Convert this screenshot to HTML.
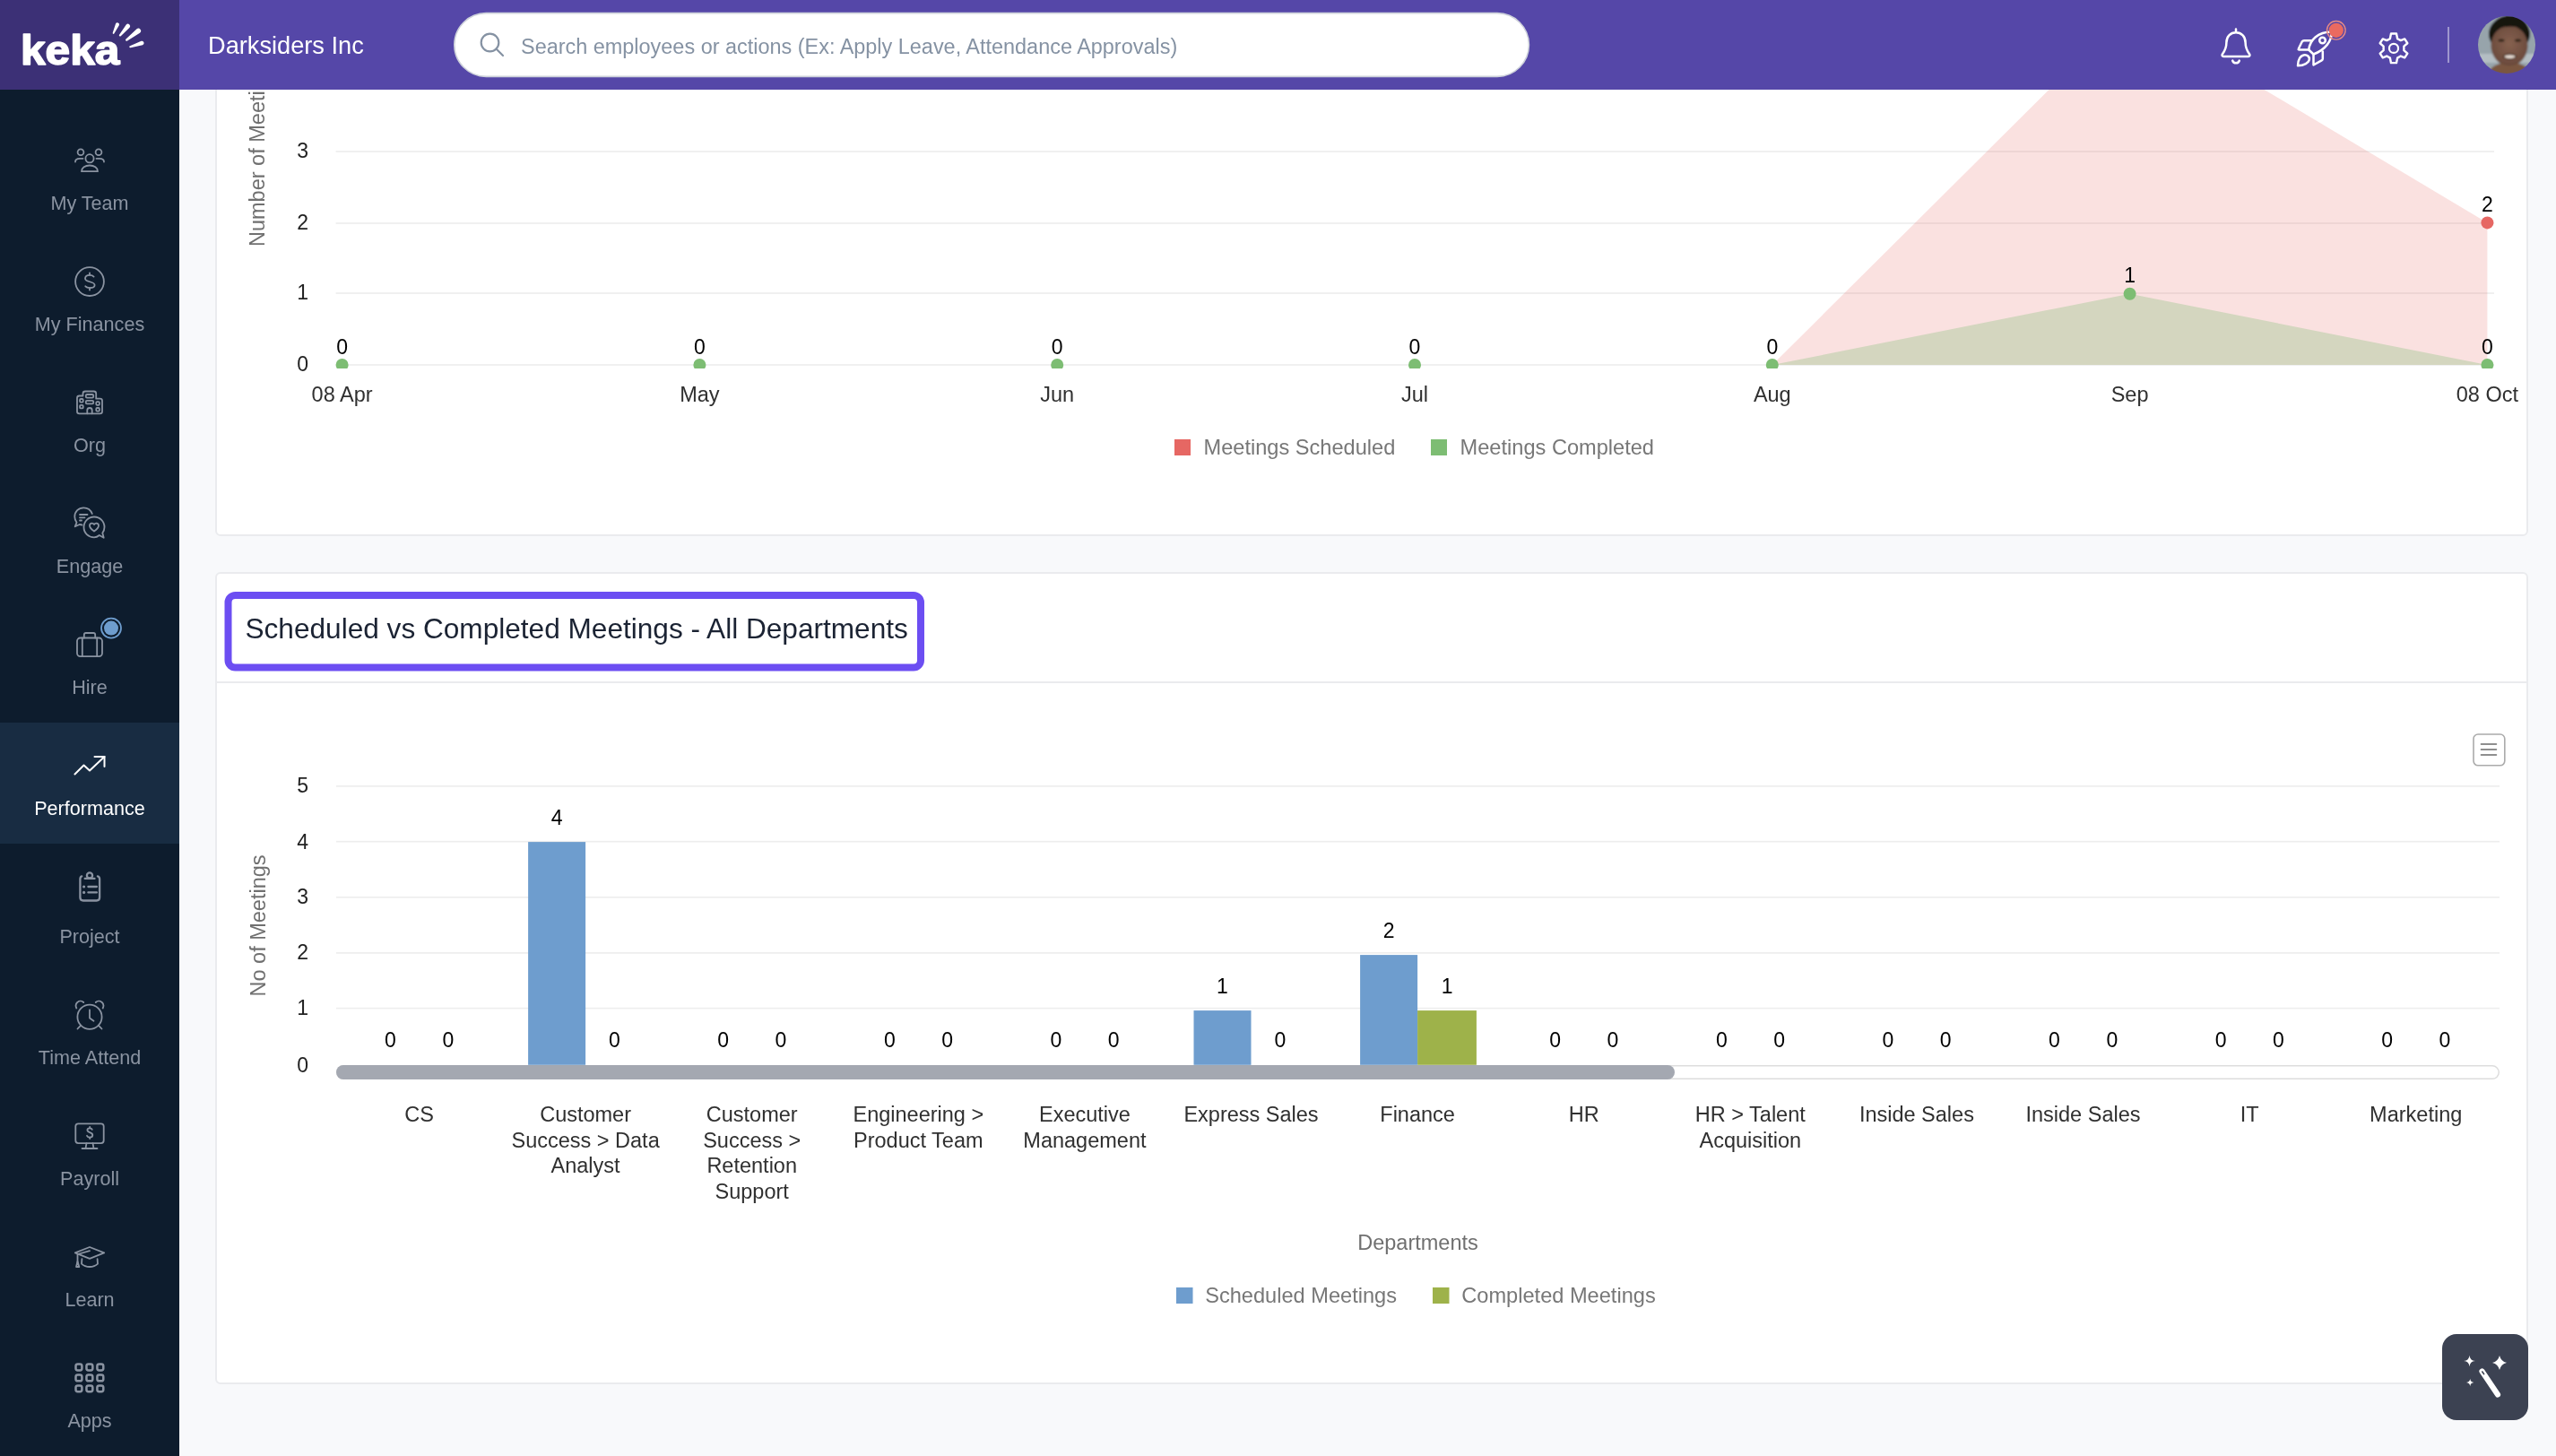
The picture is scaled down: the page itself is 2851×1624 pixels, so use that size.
<!DOCTYPE html><html><head><meta charset="utf-8"><style>*{margin:0;padding:0;box-sizing:border-box}html,body{width:2851px;height:1624px;overflow:hidden;background:#F8F9FB}svg{position:absolute;left:0;top:0;font-family:"Liberation Sans", sans-serif;will-change:transform}</style></head><body>
<svg width="2851" height="1624" viewBox="0 0 2851 1624">
<rect x="241" y="40" width="2578" height="557" rx="5" fill="#fff" stroke="#EAEBEE" stroke-width="2"/>
<rect x="241" y="639" width="2578" height="904" rx="5" fill="#fff" stroke="#EAEBEE" stroke-width="2"/>
<rect x="242" y="760" width="2576" height="2" fill="#EAEBEE"/>
<rect x="374.6" y="406.2" width="2407.4" height="1.6" fill="#EDEDED"/>
<rect x="374.6" y="326.2" width="2407.4" height="1.6" fill="#EDEDED"/>
<rect x="374.6" y="248.2" width="2407.4" height="1.6" fill="#EDEDED"/>
<rect x="374.6" y="168.2" width="2407.4" height="1.6" fill="#EDEDED"/>
<rect x="374.6" y="88.7" width="2407.4" height="1.6" fill="#EDEDED"/>
<polygon points="381.6,407.0 381.6,407.0 780.4,407.0 1179.2,407.0 1578.0,407.0 1976.8,407.0 2375.6,10.5 2774.4,248.4 2774.4,407.0" fill="#E66763" fill-opacity="0.2"/>
<polygon points="381.6,407.0 381.6,407.0 780.4,407.0 1179.2,407.0 1578.0,407.0 1976.8,407.0 2375.6,327.7 2774.4,407.0 2774.4,407.0" fill="#D4D6BF"/>
<clipPath id="cp1"><rect x="300" y="0" width="2550" height="411"/></clipPath>
<g clip-path="url(#cp1)">
<circle cx="2375.6" cy="10.5" r="7" fill="#E66763"/>
<circle cx="2774.4" cy="248.4" r="7" fill="#E66763"/>
<circle cx="381.6" cy="407.0" r="7" fill="#7DBD73"/>
<circle cx="780.4" cy="407.0" r="7" fill="#7DBD73"/>
<circle cx="1179.2" cy="407.0" r="7" fill="#7DBD73"/>
<circle cx="1578.0" cy="407.0" r="7" fill="#7DBD73"/>
<circle cx="1976.8" cy="407.0" r="7" fill="#7DBD73"/>
<circle cx="2375.6" cy="327.7" r="7" fill="#7DBD73"/>
<circle cx="2774.4" cy="407.0" r="7" fill="#7DBD73"/>
</g>
<text x="344.0" y="414.3" font-size="23" fill="#222222" text-anchor="end" >0</text>
<text x="344.0" y="334.3" font-size="23" fill="#222222" text-anchor="end" >1</text>
<text x="344.0" y="256.3" font-size="23" fill="#222222" text-anchor="end" >2</text>
<text x="344.0" y="176.3" font-size="23" fill="#222222" text-anchor="end" >3</text>
<text x="381.6" y="394.5" font-size="23" fill="#000" text-anchor="middle" >0</text>
<text x="780.4" y="394.5" font-size="23" fill="#000" text-anchor="middle" >0</text>
<text x="1179.2" y="394.5" font-size="23" fill="#000" text-anchor="middle" >0</text>
<text x="1578.0" y="394.5" font-size="23" fill="#000" text-anchor="middle" >0</text>
<text x="1976.8" y="394.5" font-size="23" fill="#000" text-anchor="middle" >0</text>
<text x="2375.6" y="315.2" font-size="23" fill="#000" text-anchor="middle" >1</text>
<text x="2774.4" y="394.5" font-size="23" fill="#000" text-anchor="middle" >0</text>
<text x="2774.4" y="235.9" font-size="23" fill="#000" text-anchor="middle" >2</text>
<text x="381.6" y="448.3" font-size="23.5" fill="#303030" text-anchor="middle" >08 Apr</text>
<text x="780.4" y="448.3" font-size="23.5" fill="#303030" text-anchor="middle" >May</text>
<text x="1179.2" y="448.3" font-size="23.5" fill="#303030" text-anchor="middle" >Jun</text>
<text x="1578.0" y="448.3" font-size="23.5" fill="#303030" text-anchor="middle" >Jul</text>
<text x="1976.8" y="448.3" font-size="23.5" fill="#303030" text-anchor="middle" >Aug</text>
<text x="2375.6" y="448.3" font-size="23.5" fill="#303030" text-anchor="middle" >Sep</text>
<text x="2774.4" y="448.3" font-size="23.5" fill="#303030" text-anchor="middle" >08 Oct</text>
<text transform="translate(294.5,275) rotate(-90)" font-size="23.5" fill="#707070">Number of Meetings</text>
<rect x="1310" y="490" width="18" height="18" fill="#E66763"/>
<text x="1342.5" y="506.5" font-size="23.6" fill="#777777" text-anchor="start" >Meetings Scheduled</text>
<rect x="1596" y="490" width="18" height="18" fill="#7DBD73"/>
<text x="1628.6" y="506.5" font-size="23.6" fill="#777777" text-anchor="start" >Meetings Completed</text>
<rect x="254.5" y="664" width="772.5" height="80.5" rx="8" fill="none" stroke="#6C4EF2" stroke-width="8"/>
<text x="273.5" y="712.2" font-size="31.6" fill="#1B2333" text-anchor="start" >Scheduled vs Completed Meetings - All Departments</text>
<rect x="2759" y="819" width="34.8" height="34.8" rx="5" fill="#fff" stroke="#ABABAB" stroke-width="1.6"/>
<rect x="2766.7" y="829.0" width="18.5" height="2" rx="0.8" fill="#8E8E8E"/>
<rect x="2766.7" y="835.0" width="18.5" height="2" rx="0.8" fill="#8E8E8E"/>
<rect x="2766.7" y="841.0" width="18.5" height="2" rx="0.8" fill="#8E8E8E"/>
<rect x="375" y="1123.8" width="2413" height="1.6" fill="#EDEDED"/>
<rect x="375" y="1062.1" width="2413" height="1.6" fill="#EDEDED"/>
<rect x="375" y="1000.0" width="2413" height="1.6" fill="#EDEDED"/>
<rect x="375" y="937.9" width="2413" height="1.6" fill="#EDEDED"/>
<rect x="375" y="876.1" width="2413" height="1.6" fill="#EDEDED"/>
<text x="344.0" y="1196.0" font-size="23" fill="#222222" text-anchor="end" >0</text>
<text x="344.0" y="1132.0" font-size="23" fill="#222222" text-anchor="end" >1</text>
<text x="344.0" y="1070.2" font-size="23" fill="#222222" text-anchor="end" >2</text>
<text x="344.0" y="1008.2" font-size="23" fill="#222222" text-anchor="end" >3</text>
<text x="344.0" y="946.5" font-size="23" fill="#222222" text-anchor="end" >4</text>
<text x="344.0" y="884.0" font-size="23" fill="#222222" text-anchor="end" >5</text>
<text transform="translate(296,1111.5) rotate(-90)" font-size="23.5" fill="#707070">No of Meetings</text>
<text x="435.5" y="1168.4" font-size="23" fill="#000" text-anchor="middle" >0</text>
<text x="499.8" y="1168.4" font-size="23" fill="#000" text-anchor="middle" >0</text>
<text x="467.5" y="1251.2" font-size="23.5" fill="#303030" text-anchor="middle" >CS</text>
<rect x="589.1" y="939.1" width="64" height="248.7" fill="#6E9DCE"/>
<text x="621.1" y="919.7" font-size="23" fill="#000" text-anchor="middle" >4</text>
<text x="685.4" y="1168.4" font-size="23" fill="#000" text-anchor="middle" >0</text>
<text x="653.1" y="1251.2" font-size="23.5" fill="#303030" text-anchor="middle" >Customer</text>
<text x="653.1" y="1279.8" font-size="23.5" fill="#303030" text-anchor="middle" >Success &gt; Data</text>
<text x="653.1" y="1308.4" font-size="23.5" fill="#303030" text-anchor="middle" >Analyst</text>
<text x="806.7" y="1168.4" font-size="23" fill="#000" text-anchor="middle" >0</text>
<text x="871.0" y="1168.4" font-size="23" fill="#000" text-anchor="middle" >0</text>
<text x="838.7" y="1251.2" font-size="23.5" fill="#303030" text-anchor="middle" >Customer</text>
<text x="838.7" y="1279.8" font-size="23.5" fill="#303030" text-anchor="middle" >Success &gt;</text>
<text x="838.7" y="1308.4" font-size="23.5" fill="#303030" text-anchor="middle" >Retention</text>
<text x="838.7" y="1337.0" font-size="23.5" fill="#303030" text-anchor="middle" >Support</text>
<text x="992.3" y="1168.4" font-size="23" fill="#000" text-anchor="middle" >0</text>
<text x="1056.6" y="1168.4" font-size="23" fill="#000" text-anchor="middle" >0</text>
<text x="1024.3" y="1251.2" font-size="23.5" fill="#303030" text-anchor="middle" >Engineering &gt;</text>
<text x="1024.3" y="1279.8" font-size="23.5" fill="#303030" text-anchor="middle" >Product Team</text>
<text x="1177.9" y="1168.4" font-size="23" fill="#000" text-anchor="middle" >0</text>
<text x="1242.2" y="1168.4" font-size="23" fill="#000" text-anchor="middle" >0</text>
<text x="1209.9" y="1251.2" font-size="23.5" fill="#303030" text-anchor="middle" >Executive</text>
<text x="1209.9" y="1279.8" font-size="23.5" fill="#303030" text-anchor="middle" >Management</text>
<rect x="1331.5" y="1127.1" width="64" height="60.7" fill="#6E9DCE"/>
<text x="1363.5" y="1107.7" font-size="23" fill="#000" text-anchor="middle" >1</text>
<text x="1427.8" y="1168.4" font-size="23" fill="#000" text-anchor="middle" >0</text>
<text x="1395.5" y="1251.2" font-size="23.5" fill="#303030" text-anchor="middle" >Express Sales</text>
<rect x="1517.1" y="1065.1" width="64" height="122.7" fill="#6E9DCE"/>
<rect x="1581.1" y="1127.1" width="65.8" height="60.7" fill="#9EB24A"/>
<text x="1549.1" y="1045.7" font-size="23" fill="#000" text-anchor="middle" >2</text>
<text x="1614.1" y="1107.7" font-size="23" fill="#000" text-anchor="middle" >1</text>
<text x="1581.1" y="1251.2" font-size="23.5" fill="#303030" text-anchor="middle" >Finance</text>
<text x="1734.7" y="1168.4" font-size="23" fill="#000" text-anchor="middle" >0</text>
<text x="1799.0" y="1168.4" font-size="23" fill="#000" text-anchor="middle" >0</text>
<text x="1766.7" y="1251.2" font-size="23.5" fill="#303030" text-anchor="middle" >HR</text>
<text x="1920.3" y="1168.4" font-size="23" fill="#000" text-anchor="middle" >0</text>
<text x="1984.6" y="1168.4" font-size="23" fill="#000" text-anchor="middle" >0</text>
<text x="1952.3" y="1251.2" font-size="23.5" fill="#303030" text-anchor="middle" >HR &gt; Talent</text>
<text x="1952.3" y="1279.8" font-size="23.5" fill="#303030" text-anchor="middle" >Acquisition</text>
<text x="2105.9" y="1168.4" font-size="23" fill="#000" text-anchor="middle" >0</text>
<text x="2170.2" y="1168.4" font-size="23" fill="#000" text-anchor="middle" >0</text>
<text x="2137.9" y="1251.2" font-size="23.5" fill="#303030" text-anchor="middle" >Inside Sales</text>
<text x="2291.5" y="1168.4" font-size="23" fill="#000" text-anchor="middle" >0</text>
<text x="2355.8" y="1168.4" font-size="23" fill="#000" text-anchor="middle" >0</text>
<text x="2323.5" y="1251.2" font-size="23.5" fill="#303030" text-anchor="middle" >Inside Sales</text>
<text x="2477.1" y="1168.4" font-size="23" fill="#000" text-anchor="middle" >0</text>
<text x="2541.4" y="1168.4" font-size="23" fill="#000" text-anchor="middle" >0</text>
<text x="2509.1" y="1251.2" font-size="23.5" fill="#303030" text-anchor="middle" >IT</text>
<text x="2662.7" y="1168.4" font-size="23" fill="#000" text-anchor="middle" >0</text>
<text x="2727.0" y="1168.4" font-size="23" fill="#000" text-anchor="middle" >0</text>
<text x="2694.7" y="1251.2" font-size="23.5" fill="#303030" text-anchor="middle" >Marketing</text>
<rect x="375.75" y="1188.85" width="2411.5" height="14.5" rx="7.25" fill="#fff" stroke="#DDDDDD" stroke-width="1.5"/>
<rect x="375" y="1188" width="1493" height="16" rx="8" fill="#A4A8B1"/>
<text x="1581.5" y="1394.2" font-size="23.5" fill="#707070" text-anchor="middle" >Departments</text>
<rect x="1312" y="1436" width="18.5" height="18" fill="#6E9DCE"/>
<text x="1344.2" y="1452.7" font-size="23.6" fill="#777777" text-anchor="start" >Scheduled Meetings</text>
<rect x="1598" y="1436" width="18.5" height="18" fill="#9EB24A"/>
<text x="1630.3" y="1452.7" font-size="23.6" fill="#777777" text-anchor="start" >Completed Meetings</text>
<rect x="0" y="0" width="2851" height="100" fill="#5547A8"/>
<rect x="0" y="0" width="200" height="100" fill="#3C3076"/>
<text x="23" y="71.8" font-size="47" font-weight="bold" fill="#fff" stroke="#fff" stroke-width="1.6" stroke-linejoin="round" textLength="110.5" lengthAdjust="spacingAndGlyphs">keka</text>
<g fill="#fff"><path d="M127.42,37.34 L132.84,28.28 A2.10,2.10 0 0 0 129.02,26.54 L125.74,36.58 A0.92,0.92 0 0 0 127.42,37.34 Z"/><path d="M134.75,40.17 L144.59,30.72 A2.50,2.50 0 0 0 140.78,27.49 L133.07,38.75 A1.10,1.10 0 0 0 134.75,40.17 Z"/><path d="M142.03,45.52 L155.99,36.73 A2.80,2.80 0 0 0 152.57,32.29 L140.52,43.57 A1.23,1.23 0 0 0 142.03,45.52 Z"/><path d="M145.58,53.25 L159.03,50.20 A2.30,2.30 0 0 0 157.60,45.83 L144.95,51.32 A1.01,1.01 0 0 0 145.58,53.25 Z"/></g>
<text x="232.0" y="60.0" font-size="27.2" fill="#fff" text-anchor="start" >Darksiders Inc</text>
<rect x="506.8" y="14.6" width="1198.6" height="70.8" rx="35.4" fill="#fff" stroke="#CDD1DA" stroke-width="1.6"/>
<g fill="none" stroke="#8592A3" stroke-width="2.2" stroke-linecap="round"><circle cx="546.5" cy="47.5" r="9.8"/><line x1="553.5" y1="54.5" x2="561" y2="62"/></g>
<text x="581.0" y="59.6" font-size="23.45" fill="#8592A3" text-anchor="start" >Search employees or actions (Ex: Apply Leave, Attendance Approvals)</text>
<g fill="none" stroke="#fff" stroke-width="2.5" stroke-linejoin="round" stroke-linecap="round"><path d="M2494,32.6 L2494,36 M2480.2,63 L2507.8,63 C2509.4,63 2510,61.6 2509,60.2 C2506.2,56.4 2504.6,52 2504.6,47.5 C2504.6,40.8 2500.2,36.3 2494,36.3 C2487.8,36.3 2483.4,40.8 2483.4,47.5 C2483.4,52 2481.8,56.4 2479,60.2 C2478,61.6 2478.6,63 2480.2,63 Z"/><path d="M2490.2,67.6 C2491.2,71.2 2496.8,71.2 2497.8,67.6"/></g>
<g fill="none" stroke="#fff" stroke-width="2.5" stroke-linejoin="round" stroke-linecap="round"><path d="M2575.2,55.5 C2576.5,45 2585,35.5 2600.8,35.5 C2601,45.5 2594,55.5 2580.5,60.5 Z"/><circle cx="2590.5" cy="45" r="3.3"/><path d="M2577.5,45.2 L2570,45.2 C2569,45.2 2568.2,45.7 2567.7,46.5 L2563.8,54.5 C2563.4,55.2 2563.8,55.6 2564.6,55.6 L2575.2,55.6"/><path d="M2590.8,57.5 L2590.8,65.5 C2590.8,66.3 2590.3,67 2589.6,67.4 L2580.5,72.5 L2580.5,60.5"/><path d="M2563,73.3 C2563,66.5 2566,61.7 2570.5,61.2 C2573.6,61 2576,63.2 2575.9,66 C2575.5,70.2 2570,73 2563,73.3 Z"/></g>
<circle cx="2605.8" cy="33.8" r="10.3" fill="none" stroke="#E58A86" stroke-width="1.4"/>
<circle cx="2605.8" cy="33.8" r="8.1" fill="#EA6A60"/>
<path transform="translate(2670,53.85) scale(0.94) translate(-2670,-53.85)" d="M2666.8,36.5 L2673.2,36.5 L2674.4,42.5 L2678.3,44.6 L2683,42.8 L2686.3,47.9 L2682.1,51.5 L2682.1,56.3 L2686.3,59.9 L2683,65 L2678.3,63.1 L2674.4,65.3 L2673.2,71.2 L2666.8,71.2 L2665.6,65.3 L2661.7,63.1 L2657,65 L2653.7,59.9 L2657.9,56.3 L2657.9,51.5 L2653.7,47.9 L2657,42.8 L2661.7,44.6 L2665.6,42.5 Z" fill="none" stroke="#fff" stroke-width="2.55" stroke-linejoin="round"/>
<circle cx="2670" cy="53.9" r="5.05" fill="none" stroke="#fff" stroke-width="2.2"/>
<rect x="2730.2" y="30" width="1.6" height="40" fill="#fff" opacity="0.55"/>
<defs><clipPath id="avc"><circle cx="2796" cy="50" r="32"/></clipPath><filter id="blr" x="-10%" y="-10%" width="120%" height="120%"><feGaussianBlur stdDeviation="0.9"/></filter><radialGradient id="face" cx="0.5" cy="0.45" r="0.55"><stop offset="0" stop-color="#86614F"/><stop offset="1" stop-color="#6A4A3C"/></radialGradient></defs>
<g clip-path="url(#avc)"><g filter="url(#blr)"><rect x="2760" y="14" width="72" height="72" fill="#97A4AB"/><rect x="2760" y="60" width="72" height="10" fill="#B4BEC3"/><path d="M2774,86 C2776,74 2786,70 2799,70 C2812,70 2822,74 2824,86 Z" fill="#7A563F"/><ellipse cx="2799" cy="38" rx="23" ry="20" fill="#151311"/><ellipse cx="2799" cy="51" rx="20.5" ry="22.5" fill="url(#face)"/><path d="M2778,40 C2778,24 2788,17 2800,17 C2812,17 2821,24 2821,40 C2817,33 2812,30 2800,29.5 C2788,30 2782,33 2778,40 Z" fill="#151311"/><ellipse cx="2790" cy="45" rx="3.5" ry="1.6" fill="#2E2018"/><ellipse cx="2808.5" cy="45" rx="3.5" ry="1.6" fill="#2E2018"/><ellipse cx="2799.5" cy="63" rx="7.5" ry="3.2" fill="#4A3026"/><ellipse cx="2799.5" cy="63.2" rx="5.8" ry="1.9" fill="#E6DBD2"/></g></g>
<rect x="0" y="100" width="200" height="1524" fill="#0D1C2D"/>
<rect x="0" y="806" width="200" height="135" fill="#182C42"/>
<text x="100.0" y="233.9" font-size="21.6" fill="#8A93A1" text-anchor="middle" >My Team</text>
<text x="100.0" y="368.9" font-size="21.6" fill="#8A93A1" text-anchor="middle" >My Finances</text>
<text x="100.0" y="504.0" font-size="21.6" fill="#8A93A1" text-anchor="middle" >Org</text>
<text x="100.0" y="638.7" font-size="21.6" fill="#8A93A1" text-anchor="middle" >Engage</text>
<text x="100.0" y="773.9" font-size="21.6" fill="#8A93A1" text-anchor="middle" >Hire</text>
<text x="100.0" y="908.8" font-size="21.6" fill="#FFFFFF" text-anchor="middle" >Performance</text>
<text x="100.0" y="1051.8" font-size="21.6" fill="#8A93A1" text-anchor="middle" >Project</text>
<text x="100.0" y="1186.8" font-size="21.6" fill="#8A93A1" text-anchor="middle" >Time Attend</text>
<text x="100.0" y="1321.8" font-size="21.6" fill="#8A93A1" text-anchor="middle" >Payroll</text>
<text x="100.0" y="1456.8" font-size="21.6" fill="#8A93A1" text-anchor="middle" >Learn</text>
<text x="100.0" y="1591.8" font-size="21.6" fill="#8A93A1" text-anchor="middle" >Apps</text>
<g fill="none" stroke="#8A93A1" stroke-width="1.8" stroke-linecap="round" stroke-linejoin="round"><circle cx="90" cy="169.8" r="3.4"/><circle cx="110" cy="169.8" r="3.4"/><circle cx="100" cy="176.8" r="4.6"/><path d="M91,191.2 C91,187 95,184.5 100,184.5 C105,184.5 109,187 109,191.2 Z"/><path d="M84,180.5 C84,178 86,176.8 89,176.8 L92.5,176.8"/><path d="M116,180.5 C116,178 114,176.8 111,176.8 L107.5,176.8"/></g>
<g fill="none" stroke="#8A93A1" stroke-width="1.8" stroke-linecap="round" stroke-linejoin="round"><circle cx="100" cy="314.1" r="15.9"/><path d="M104.6,308.6 C103.6,307.5 102,306.9 100,306.9 C97,306.9 95,308.5 95,310.7 C95,315 105.6,313.5 105.6,318 C105.6,320 103.4,321.1 100.2,321.1 C98,321.1 96.3,320.5 95.3,319.3"/><line x1="100" y1="304.4" x2="100" y2="306.9"/><line x1="100" y1="321.1" x2="100" y2="323.6"/></g>
<g fill="none" stroke="#8A93A1" stroke-width="1.8" stroke-linecap="round" stroke-linejoin="round"><path d="M92.5,441.5 L88.5,441.5 C87,441.5 86,442.5 86,444 L86,459 C86,460.5 87,461.3 88.5,461.3 L111.5,461.3 C113,461.3 114,460.5 114,459 L114,447 C114,445.5 113,444.7 111.5,444.7 L107.2,444.7 L107.2,439 C107.2,437.5 106.2,436.5 104.7,436.5 L95,436.5 C93.5,436.5 92.5,437.5 92.5,439 Z"/><path d="M97.3,461.3 L97.3,457.5 C97.3,455.8 98.5,455 100,455 C101.5,455 102.7,455.8 102.7,457.5 L102.7,461.3"/><rect x="95.8" y="440" width="8.4" height="3.6" rx="1.2"/><rect x="95.8" y="446.8" width="8.4" height="3.6" rx="1.2"/><rect x="89.1" y="445" width="3.6" height="3.6" rx="1"/><rect x="89.1" y="451.8" width="3.6" height="3.6" rx="1"/><rect x="107.3" y="448.2" width="3.6" height="3.6" rx="1"/><rect x="107.3" y="455" width="3.6" height="3.6" rx="1"/></g>
<g fill="none" stroke="#8A93A1" stroke-width="1.8" stroke-linecap="round" stroke-linejoin="round"><path d="M102.8,573 C101.3,569 97.5,566.3 93.3,566.3 C87.6,566.3 83.3,570.8 83.3,576.3 C83.3,578.8 84.2,581 85.5,582.8 L83.7,587.3 L88.8,585 L91.5,585.5"/><line x1="89" y1="574" x2="97.5" y2="574"/><line x1="89" y1="577.3" x2="94.5" y2="577.3"/><line x1="89" y1="580.5" x2="91" y2="580.5"/><path d="M105,576.5 C111.5,576.5 116.5,581.5 116.5,588 C116.5,590.5 115.8,592.5 114.3,594.5 L115.7,599.8 L110.8,597 C109,598.5 107,599.3 105,599.3 C98.5,599.3 93.5,594.5 93.5,588 C93.5,581.5 98.5,576.5 105,576.5 Z"/><path d="M105,592.5 C102,590.5 100,588.8 100,586.3 C100,584.8 101.2,583.6 102.6,583.6 C103.6,583.6 104.5,584.2 105,585 C105.5,584.2 106.4,583.6 107.4,583.6 C108.8,583.6 110,584.8 110,586.3 C110,588.8 108,590.5 105,592.5 Z"/></g>
<g fill="none" stroke="#8A93A1" stroke-width="1.8" stroke-linecap="round" stroke-linejoin="round"><rect x="86" y="711.5" width="28" height="20.6" rx="3.5"/><line x1="91.8" y1="711.5" x2="91.8" y2="732"/><line x1="108.2" y1="711.5" x2="108.2" y2="732"/><path d="M93.8,711.5 L93.8,708 C93.8,706.8 94.6,706 95.8,706 L104.2,706 C105.4,706 106.2,706.8 106.2,708 L106.2,711.5"/></g>
<circle cx="124" cy="700.6" r="11" fill="none" stroke="#6E9DCE" stroke-width="1.8"/><circle cx="124" cy="700.6" r="8" fill="#6E9DCE"/>
<g fill="none" stroke="#fff" stroke-width="2" stroke-linecap="round" stroke-linejoin="round"><path d="M83.5,863.5 L93.5,853.5 L100,859.5 L116.5,844"/><path d="M105.5,844 L116.5,844 L116.5,855"/></g>
<g fill="none" stroke="#8A93A1" stroke-width="2.3" stroke-linecap="round" stroke-linejoin="round"><path d="M91.2,977.3 C89.9,977.6 89.4,978.8 89.4,980.5 L89.4,1001 C89.4,1003 90.8,1004.5 92.8,1004.5 L107.7,1004.5 C109.7,1004.5 111.1,1003 111.1,1001 L111.1,980.5 C111.1,978.8 110.4,977.6 108.9,977.3"/><circle cx="100" cy="976.4" r="3.1"/><line x1="94.7" y1="979.9" x2="105.5" y2="979.9"/><line x1="98.4" y1="989" x2="107.9" y2="989"/><line x1="98.4" y1="995.4" x2="107.9" y2="995.4"/></g><circle cx="93.6" cy="989" r="1.6" fill="#8A93A1"/><circle cx="93.6" cy="995.4" r="1.6" fill="#8A93A1"/>
<g fill="none" stroke="#8A93A1" stroke-width="1.8" stroke-linecap="round" stroke-linejoin="round"><circle cx="100" cy="1134.2" r="13.6"/><path d="M100,1126.4 L100,1135.5 L104.5,1138.7"/><path d="M85.3,1124.5 C84.3,1122.5 84.5,1119.5 86.5,1117.8 C88.5,1116 91.5,1116.3 93.2,1118"/><path d="M114.7,1124.5 C115.7,1122.5 115.5,1119.5 113.5,1117.8 C111.5,1116 108.5,1116.3 106.8,1118"/><line x1="90" y1="1143.8" x2="86.5" y2="1147.5"/><line x1="110" y1="1143.8" x2="113.5" y2="1147.5"/></g>
<g fill="none" stroke="#8A93A1" stroke-width="1.8" stroke-linecap="round" stroke-linejoin="round"><rect x="84.3" y="1253.3" width="31.4" height="21.8" rx="3"/><path d="M96.5,1275.2 L95.5,1280.8 M103.5,1275.2 L104.5,1280.8"/><line x1="91.5" y1="1281" x2="108.5" y2="1281"/><path d="M102.8,1259.8 C102.3,1258.8 101.3,1258.3 100.2,1258.3 C98.4,1258.3 97.4,1259.3 97.4,1260.6 C97.4,1263.6 103.3,1262.6 103.3,1266 C103.3,1267.5 102,1268.6 100.2,1268.6 C98.8,1268.6 97.6,1268 97,1266.8"/><line x1="100.2" y1="1257" x2="100.2" y2="1258.3"/><line x1="100.2" y1="1268.6" x2="100.2" y2="1270"/></g>
<g fill="none" stroke="#8A93A1" stroke-width="1.8" stroke-linecap="round" stroke-linejoin="round"><path d="M83.8,1397.4 L100,1391 L116.2,1397.4 L100,1403.8 Z"/><path d="M91.4,1404.2 L91,1409.6 C93.5,1412 96.5,1413 100,1413 C103.5,1413 106.5,1412 109,1409.6 L108.6,1404.2"/><path d="M100,1395.2 L86.5,1399 L86.5,1408"/><path d="M86.5,1407 L85,1413 L88.3,1413 Z"/></g>
<rect x="84.50" y="1521.50" width="6.9" height="6.9" rx="2.2" fill="none" stroke="#8A93A1" stroke-width="2.5"/>
<rect x="96.45" y="1521.50" width="6.9" height="6.9" rx="2.2" fill="none" stroke="#8A93A1" stroke-width="2.5"/>
<rect x="108.40" y="1521.50" width="6.9" height="6.9" rx="2.2" fill="none" stroke="#8A93A1" stroke-width="2.5"/>
<rect x="84.50" y="1533.45" width="6.9" height="6.9" rx="2.2" fill="none" stroke="#8A93A1" stroke-width="2.5"/>
<rect x="96.45" y="1533.45" width="6.9" height="6.9" rx="2.2" fill="none" stroke="#8A93A1" stroke-width="2.5"/>
<rect x="108.40" y="1533.45" width="6.9" height="6.9" rx="2.2" fill="none" stroke="#8A93A1" stroke-width="2.5"/>
<rect x="84.50" y="1545.40" width="6.9" height="6.9" rx="2.2" fill="none" stroke="#8A93A1" stroke-width="2.5"/>
<rect x="96.45" y="1545.40" width="6.9" height="6.9" rx="2.2" fill="none" stroke="#8A93A1" stroke-width="2.5"/>
<rect x="108.40" y="1545.40" width="6.9" height="6.9" rx="2.2" fill="none" stroke="#8A93A1" stroke-width="2.5"/>
<rect x="2724" y="1488" width="96" height="96" rx="16" fill="#3C4252"/>
<path d="M2788,1512 Q2789.6,1518.4 2796,1520 Q2789.6,1521.6 2788,1528 Q2786.4,1521.6 2780,1520 Q2786.4,1518.4 2788,1512 Z" fill="#fff"/>
<path d="M2754.5,1511.7 Q2754.95,1517.55 2760.8,1518 Q2754.95,1518.45 2754.5,1524.3 Q2754.05,1518.45 2748.2,1518 Q2754.05,1517.55 2754.5,1511.7 Z" fill="#fff"/>
<path d="M2755.2,1537.8 Q2755.5499999999997,1541.65 2759.3999999999996,1542 Q2755.5499999999997,1542.35 2755.2,1546.2 Q2754.85,1542.35 2751.0,1542 Q2754.85,1541.65 2755.2,1537.8 Z" fill="#fff"/>
<line x1="2768.5" y1="1529.5" x2="2786" y2="1555.5" stroke="#fff" stroke-width="6.2" stroke-linecap="round"/>
<line x1="2768.8" y1="1530" x2="2770.6" y2="1532.6" stroke="#3C4252" stroke-width="1.6" stroke-linecap="round"/>
</svg></body></html>
